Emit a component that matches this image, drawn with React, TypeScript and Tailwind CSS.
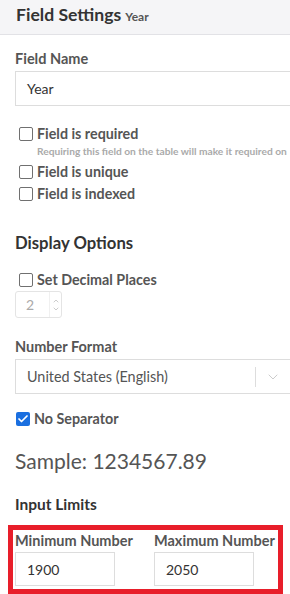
import { Check, ChevronDown, ChevronUp } from "lucide-react";

const font = { fontFamily: "Lato, 'Noto Sans', sans-serif" };

function Box({ checked }: { checked?: boolean }) {
  return checked ? (
    <span className="flex h-[14px] w-[14px] items-center justify-center rounded-[2px] bg-[#1a6fe0]">
      <Check size={12} strokeWidth={3.5} className="text-white" />
    </span>
  ) : (
    <span className="h-[14px] w-[14px] rounded-[2px] border-[1.5px] border-[#707070] bg-white" />
  );
}

function CheckRow({ label, checked, hint }: { label: string; checked?: boolean; hint?: string }) {
  return (
    <div className="flex flex-col">
      <div className="flex items-center gap-[4px]">
        <Box checked={checked} />
        <span className="text-[14.3px] font-bold leading-[18px] text-[#555]">{label}</span>
      </div>
      {hint && (
        <span className="ml-[18px] whitespace-nowrap text-[10.2px] font-bold leading-[16px] text-[#aaa]">{hint}</span>
      )}
    </div>
  );
}

export default function App() {
  return (
    <div style={font} className="h-[594px] w-[290px] overflow-hidden bg-white">
      <div className="flex h-[35px] items-end gap-[4px] border-b border-[#e2e2e6] bg-[#f5f5f7] px-[16px] pb-[8px]">
        <span className="text-[17.6px] font-bold leading-[22px] text-[#333]">Field Settings</span>
        <span className="pb-[1px] text-[12px] font-bold leading-[16px] text-[#555]">Year</span>
      </div>

      <div className="pl-[15px]">
        <div className="mt-[14px] text-[14.5px] font-bold leading-[19px] text-[#555]">Field Name</div>
        <div className="mt-[3px] flex h-[35px] items-center border border-[#ddd] border-r-0 pl-[11px] text-[14px] text-[#333]">
          Year
        </div>

        <div className="mt-[19px] ml-[4px] flex flex-col gap-[4px]">
          <CheckRow label="Field is required" hint="Requiring this field on the table will make it required on" />
          <CheckRow label="Field is unique" />
          <CheckRow label="Field is indexed" />
        </div>

        <div className="mt-[30px] text-[16.7px] font-bold leading-[20px] text-[#333]">Display Options</div>

        <div className="mt-[18px] ml-[4px]">
          <CheckRow label="Set Decimal Places" />
        </div>
        <div className="mt-[2px] flex h-[27px] w-[47px] items-center justify-between rounded-[3px] border border-[#e4e4e4] pl-[10px] text-[14px] text-[#aaa]">
          2
          <span className="flex h-full w-[12px] flex-col items-center justify-center border-l border-[#f0f0f0] text-[#ccc]">
            <ChevronUp size={8} strokeWidth={3} />
            <ChevronDown size={8} strokeWidth={3} />
          </span>
        </div>

        <div className="mt-[19px] text-[14.5px] font-bold leading-[19px] text-[#555]">Number Format</div>
        <div className="mt-[3px] flex h-[35px] items-center border border-[#ddd] border-r-0 pl-[11px] text-[14.4px] text-[#555]">
          <span className="flex-1">United States (English)</span>
          <span className="h-[20px] w-px bg-[#ddd]" />
          <ChevronDown size={16} strokeWidth={1.5} className="mx-[9px] text-[#ccc]" />
        </div>

        <div className="mt-[16px] ml-[1px]">
          <CheckRow label="No Separator" checked />
        </div>

        <div className="mt-[20px] text-[21px] leading-[26px] text-[#555]">Sample: 1234567.89</div>

        <div className="mt-[20px] text-[15.5px] font-bold leading-[20px] text-[#333]">Input Limits</div>
      </div>

      <div className="mt-[11px] ml-[8px] flex h-[69px] w-[275px] border-[5px] border-[#e81e2a] pl-[2px] pt-[1px]">
        <div className="flex w-[139px] flex-col">
          <span className="whitespace-nowrap text-[14.5px] font-bold leading-[19px] text-[#555]">Minimum Number</span>
          <div className="mt-[2px] flex h-[34px] w-[100px] items-center border border-[#ddd] pl-[11px] text-[14px] text-[#333]">1900</div>
        </div>
        <div className="flex flex-col">
          <span className="whitespace-nowrap text-[14.5px] font-bold leading-[19px] text-[#555]">Maximum Number</span>
          <div className="mt-[2px] flex h-[34px] w-[100px] items-center border border-[#ddd] pl-[11px] text-[14px] text-[#333]">2050</div>
        </div>
      </div>
    </div>
  );
}
